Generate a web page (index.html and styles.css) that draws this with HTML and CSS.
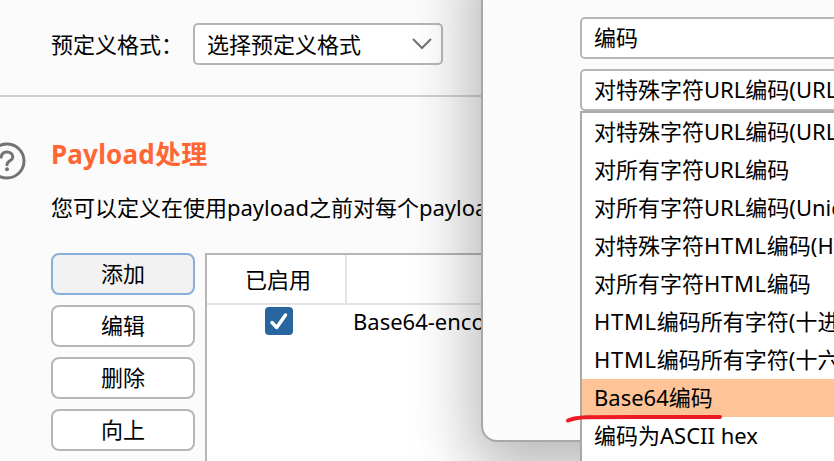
FILE: index.html
```html
<!DOCTYPE html>
<html lang="zh-CN">
<head>
<meta charset="utf-8">
<title>Payload处理</title>
<link rel="stylesheet" href="styles.css">
</head>
<body>
<main class="page">
  <section class="format">
    <span class="format-label">预定义格式：</span>
    <div class="select format-select">
      <span>选择预定义格式</span>
      <svg class="chevron" width="20" height="12" viewBox="0 0 20 12"><path d="M1.500 1.500 10 10l8.500-8.500" /></svg>
    </div>
  </section>
  <section class="processing">
    <svg class="help" width="38" height="38" viewBox="0 0 38 38"><circle cx="19" cy="19" r="17"/><path d="M13.200 15.200c.3-3.200 2.600-5.200 5.800-5.200 3.300 0 5.800 2 5.800 5 0 3.800-5.800 3.800-5.800 7.800"/><circle class="dot" cx="19" cy="27.300" r="2"/></svg>
    <div class="content">
      <h2 class="title">Payload处理</h2>
      <p class="description">您可以定义在使用payload之前对每个payload</p>
      <div class="rules">
        <div class="buttons">
          <button class="button focused">添加</button>
          <button class="button">编辑</button>
          <button class="button">删除</button>
          <button class="button">向上</button>
        </div>
        <div class="table">
          <div class="row head"><div class="cell enabled">已启用</div><div class="cell"></div></div>
          <div class="row">
            <div class="cell enabled"><svg class="checkbox" width="28" height="28" viewBox="0 0 28 28"><rect width="28" height="28" rx="4"/><path d="m7 15.500 4.700 5L20.500 8"/></svg></div>
            <div class="cell rule">Base64-encode</div>
          </div>
        </div>
      </div>
    </div>
  </section>
</main>
<aside class="dialog">
  <div class="select">编码</div>
  <div class="select">对特殊字符URL编码(URL)</div>
</aside>
<ul class="menu">
  <li class="option">对特殊字符URL编码(URL)</li>
  <li class="option">对所有字符URL编码</li>
  <li class="option">对所有字符URL编码(Unicode)</li>
  <li class="option">对特殊字符<span class="caps">HTML</span>编码(HTML)</li>
  <li class="option">对所有字符<span class="caps">HTML</span>编码</li>
  <li class="option"><span class="caps">HTML</span>编码所有字符(十进制)</li>
  <li class="option"><span class="caps">HTML</span>编码所有字符(十六进制)</li>
  <li class="option selected">Base64编码</li>
  <li class="option">编码为ASCII hex</li>
</ul>
<svg class="underline" width="160" height="12" viewBox="0 0 160 12"><path d="M4 8.500C10 6 14 5.500 22 5.200L70 5H156"/></svg>
</body>
</html>
```

FILE: styles.css
```css
* { box-sizing: border-box; }

body {
  margin: 0;
  width: 834px;
  height: 461px;
  overflow: hidden;
  position: relative;
  background: #fbfbfb;
  color: #000;
  font: 22px/36px "Noto Sans", "Noto Sans CJK SC", sans-serif;
  white-space: nowrap;
}

.page { height: 461px; overflow: hidden; }

.format {
  display: flex;
  height: 97px;
  padding: 23px 0 0 51px;
  border-bottom: 2px solid #d0d0d0;
}

.format-label { width: 142px; line-height: 42px; }

.select {
  height: 42px;
  padding: 0 11px 0 12px;
  border: 2px solid #bab4b5;
  border-radius: 5px;
  background: #fff;
}

.format-select {
  display: flex;
  width: 250px;
  align-items: center;
  justify-content: space-between;
  padding: 0 9px 0 12px;
}

.format-select span { padding-bottom: 1px; }

.chevron, .help, .underline { fill: none; stroke: #737373; stroke-width: 2; stroke-linecap: round; }

.processing { display: flex; padding-top: 37px; }

.help { flex: none; margin: 8px 13px 0 -12px; stroke-width: 3; }
.help .dot { fill: #737373; stroke: none; }

.content { flex: none; width: 783px; margin-left: 12px; }

.title {
  margin: 0;
  font-size: 26px;
  line-height: 40px;
  letter-spacing: 0.2px;
  color: #ff6633;
}

.description { width: 450px; margin: 14px 0 0; line-height: 38px; }

.rules { display: flex; gap: 10px; margin-top: 27px; }

.buttons { display: flex; flex-direction: column; gap: 10px; width: 144px; }

.button {
  height: 42px;
  padding: 0 0 2px;
  border: 2px solid #bab4b5;
  border-radius: 8px;
  background: #fff;
  color: #000;
  font: inherit;
}

.focused { border-color: #87afda; background: #f2f2f2; }

.table { width: 620px; height: 240px; border: 2px solid #bab4b5; background: #fff; }

.row { display: flex; height: 32px; }
.head { height: 50px; border-bottom: 2px solid #e4e4e4; }
.enabled { display: flex; width: 144px; justify-content: center; align-items: center; }
.head .enabled { width: 140px; padding: 0 0 0 4px; border-right: 2px solid #e4e4e4; }
.rule { padding-left: 2px; line-height: 32px; }

.checkbox { fill: #28669f; }
.checkbox path { fill: none; stroke: #fff; stroke-width: 3.5; stroke-linecap: round; stroke-linejoin: round; }

.dialog {
  position: absolute;
  left: 481px;
  top: -60px;
  display: flex;
  flex-direction: column;
  gap: 10px;
  width: 500px;
  height: 502px;
  padding: 75px 0 0 97px;
  border: 2px solid #a8a8a8;
  border-radius: 16px;
  background: #fbfbfb;
  box-shadow: 0 20px 62px 10px rgba(0, 0, 0, 0.28);
}

.menu {
  position: absolute;
  left: 580px;
  top: 111px;
  width: 300px;
  height: 400px;
  margin: 0;
  padding: 0;
  border: 2px solid #a9a9a9;
  background: #fff;
  list-style: none;
}

.option { height: 38px; padding-left: 12px; }
.caps { letter-spacing: 0.7px; }
.selected { background: #ffc398; }

.underline { position: absolute; left: 564px; top: 412px; stroke: #ed1c24; stroke-width: 4; }
```
